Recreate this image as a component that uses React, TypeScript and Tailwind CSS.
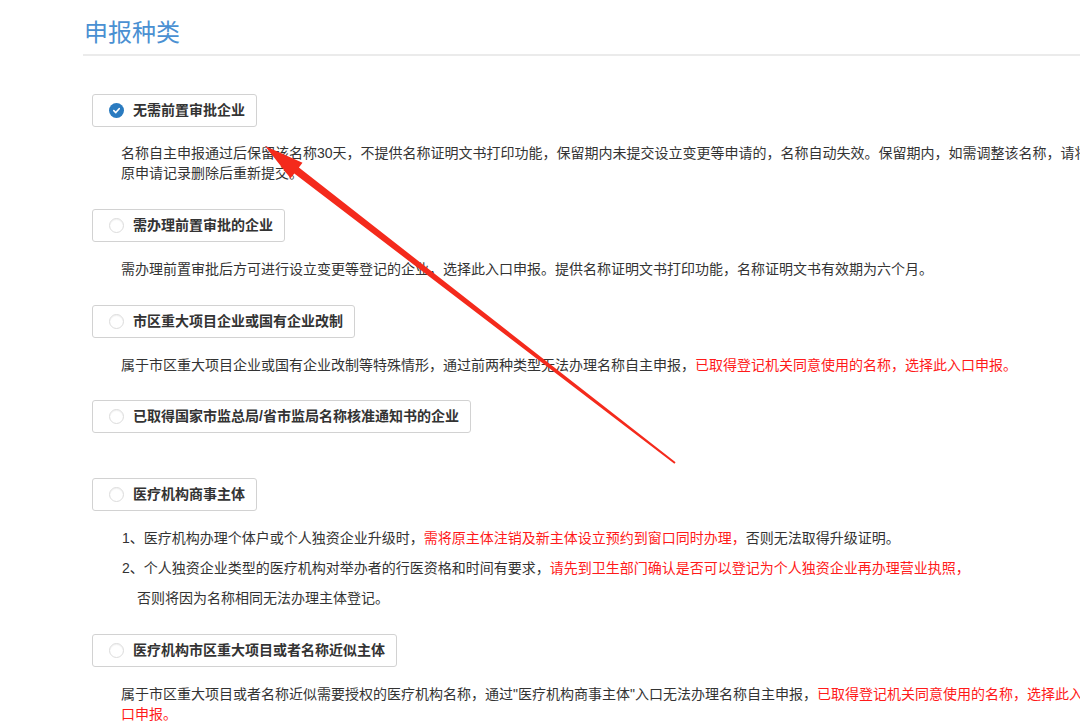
import React from "react";

const Radio = ({ checked }: { checked?: boolean }) =>
  checked ? (
    <span className="flex items-center justify-center w-[15px] h-[15px] rounded-full bg-[#2a7bc0] shrink-0">
      <svg width="9" height="9" viewBox="0 0 10 10">
        <path d="M2 5.2 L4.2 7.3 L8 3" fill="none" stroke="#fff" strokeWidth="1.8" strokeLinecap="round" strokeLinejoin="round" />
      </svg>
    </span>
  ) : (
    <span className="w-[15px] h-[15px] rounded-full border border-[#dcdcdc] bg-white shadow-[inset_0_1px_1px_rgba(0,0,0,0.06)] shrink-0" />
  );

const TypeButton = ({ label, checked }: { label: string; checked?: boolean }) => (
  <div className="self-start flex items-center h-[33px] pl-[16px] pr-[11px] gap-[9px] border border-[#d2d2d2] rounded-[3px] bg-white">
    <Radio checked={checked} />
    <span className="text-[14px] font-bold text-[#333]">{label}</span>
  </div>
);

const Red = ({ children }: { children: React.ReactNode }) => (
  <span className="text-[#ff1a1a]">{children}</span>
);

const App = () => {
  return (
    <div className="relative w-[1080px] h-[723px] overflow-hidden bg-white font-['Liberation_Sans','Noto_Sans_CJK_SC',sans-serif]">
      <div className="flex flex-col pl-[83px] pt-[17px]">
        <h1 className="pl-[1px] text-[24px] leading-[32px] text-[#4a90d2]">申报种类</h1>
        <div className="mt-[5px] h-[2px] bg-[#ebebeb]" />

        <div className="flex flex-col pl-[9px] mt-[38px]">
          <TypeButton label="无需前置审批企业" checked />
          <div className="mt-[16px] mb-[26px] pl-[29px] text-[14px] leading-[20px] text-[#333] whitespace-nowrap">
            名称自主申报通过后保留该名称30天，不提供名称证明文书打印功能，保留期内未提交设立变更等申请的，名称自动失效。保留期内，如需调整该名称，请将
            <br />
            原申请记录删除后重新提交。
          </div>

          <TypeButton label="需办理前置审批的企业" />
          <div className="mt-[17px] mb-[26px] pl-[29px] text-[14px] leading-[20px] text-[#333] whitespace-nowrap">
            需办理前置审批后方可进行设立变更等登记的企业，选择此入口申报。提供名称证明文书打印功能，名称证明文书有效期为六个月。
          </div>

          <TypeButton label="市区重大项目企业或国有企业改制" />
          <div className="mt-[17px] mb-[25px] pl-[29px] text-[14px] leading-[20px] text-[#333] whitespace-nowrap">
            属于市区重大项目企业或国有企业改制等特殊情形，通过前两种类型无法办理名称自主申报，
            <Red>已取得登记机关同意使用的名称，选择此入口申报。</Red>
          </div>

          <TypeButton label="已取得国家市监总局/省市监局名称核准通知书的企业" />
          <div className="h-[45px]" />

          <TypeButton label="医疗机构商事主体" />
          <div className="mt-[12px] mb-[21px] pl-[30px] text-[14px] text-[#333] whitespace-nowrap flex flex-col">
            <div className="h-[30px] leading-[30px]">
              1、医疗机构办理个体户或个人独资企业升级时，
              <Red>需将原主体注销及新主体设立预约到窗口同时办理，</Red>
              否则无法取得升级证明。
            </div>
            <div className="h-[30px] leading-[30px]">
              2、个人独资企业类型的医疗机构对举办者的行医资格和时间有要求，
              <Red>请先到卫生部门确认是否可以登记为个人独资企业再办理营业执照，</Red>
            </div>
            <div className="h-[30px] leading-[30px] pl-[15px]">否则将因为名称相同无法办理主体登记。</div>
          </div>

          <TypeButton label="医疗机构市区重大项目或者名称近似主体" />
          <div className="mt-[17px] pl-[29px] text-[14px] leading-[20px] text-[#333] whitespace-nowrap">
            属于市区重大项目或者名称近似需要授权的医疗机构名称，通过"医疗机构商事主体"入口无法办理名称自主申报，
            <Red>已取得登记机关同意使用的名称，选择此入</Red>
            <br />
            <Red>口申报。</Red>
          </div>
        </div>
      </div>

      {/* annotation arrow drawn over the page */}
      <svg className="absolute inset-0 pointer-events-none" width="1080" height="723" viewBox="0 0 1080 723">
        <polygon
          points="265,146 302.5,162.8 298.9,167.5 675.6,462.3 674.4,463.7 294.3,173.5 290.5,178.2"
          fill="#f42a1c"
        />
      </svg>
    </div>
  );
};

export default App;
